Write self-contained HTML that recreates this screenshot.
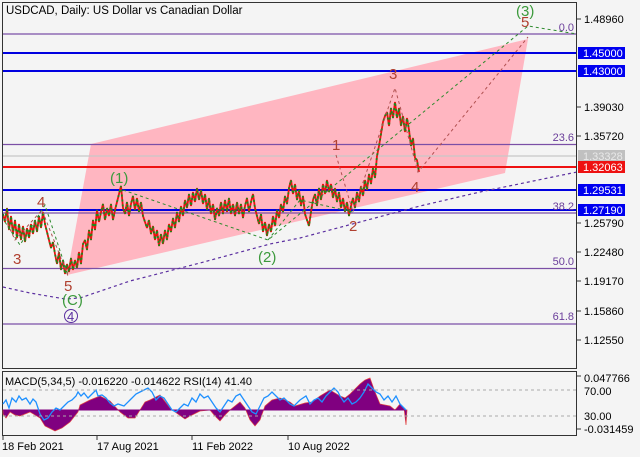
<!DOCTYPE html>
<html><head><meta charset="utf-8"><style>
html,body{margin:0;padding:0;background:#f4f4f4;}
svg{display:block;font-family:"Liberation Sans",sans-serif;}
</style></head><body>
<svg width="640" height="457" viewBox="0 0 640 457" xmlns="http://www.w3.org/2000/svg">
<defs>
<polyline id="pr" points="3,214 5,222 7,208 9,230 11,216 13,234 15,220 17,238 19,224 21,240 23,226 25,242 27,228 29,238 31,224 33,234 35,220 37,232 39,216 41,228 43,212 45,224 47,232 49,240 51,248 53,242 55,254 57,264 59,252 61,270 63,260 65,274 67,264 69,272 71,258 73,270 75,260 77,268 79,252 81,264 83,244 85,240 87,250 89,230 91,240 93,220 95,230 97,210 99,222 101,212 103,204 105,220 107,208 109,216 111,204 113,220 115,210 117,202 119,194 121,186 123,208 125,214 127,202 129,216 131,204 133,196 135,210 137,198 139,212 141,202 143,216 145,222 147,228 149,220 151,234 153,226 155,240 157,230 159,246 161,234 163,244 165,230 167,240 169,224 171,232 173,218 175,228 177,212 179,222 181,206 183,216 185,200 187,208 189,194 191,206 193,192 195,202 197,188 199,200 201,190 203,204 205,194 207,210 209,198 211,214 213,204 215,220 217,208 219,216 221,202 223,214 225,200 227,212 229,198 231,214 233,204 235,216 237,202 239,214 241,204 243,218 245,206 247,198 249,212 251,202 253,194 255,208 257,216 259,224 261,214 263,232 265,222 267,236 269,224 271,232 273,216 275,226 277,210 279,218 281,204 283,212 285,196 287,204 289,188 291,180 293,194 295,184 297,200 299,190 301,206 303,196 305,214 307,220 309,226 311,212 313,200 315,194 317,206 319,188 321,200 323,184 325,194 327,180 329,192 331,184 333,198 335,188 337,202 339,192 341,208 343,198 345,212 347,202 349,216 351,206 353,198 355,208 357,192 359,202 361,186 363,196 365,180 367,190 369,174 371,184 373,168 375,178 377,156 379,146 381,134 383,122 385,116 387,112 389,126 391,108 393,118 395,102 397,118 399,108 401,126 403,116 405,132 407,118 409,130 411,146 413,138 415,158 417,160 419,172"/>
</defs>
<rect width="640" height="457" fill="#f4f4f4"/>
<polygon points="91,144 528,39 505,173 67,275" fill="#ffb6c1"/>
<g stroke-width="1.3">
<line x1="2" y1="34" x2="576" y2="34" stroke="#7b4fa6"/>
<line x1="2" y1="53" x2="576" y2="53" stroke="#0000e0" stroke-width="2"/>
<line x1="2" y1="71" x2="576" y2="71" stroke="#0000e0" stroke-width="2"/>
<line x1="2" y1="144.5" x2="576" y2="144.5" stroke="#7b4fa6"/>
<line x1="2" y1="156" x2="576" y2="156" stroke="#c8c8c8"/>
<line x1="2" y1="167" x2="576" y2="167" stroke="#ee1111" stroke-width="2"/>
<line x1="2" y1="190" x2="576" y2="190" stroke="#0000e0" stroke-width="2"/>
<line x1="2" y1="210" x2="576" y2="210" stroke="#0000e0" stroke-width="2"/>
<line x1="2" y1="213" x2="576" y2="213" stroke="#7b4fa6"/>
<line x1="2" y1="268.5" x2="576" y2="268.5" stroke="#7b4fa6"/>
<line x1="2" y1="324" x2="576" y2="324" stroke="#7b4fa6"/>
</g>
<g font-size="11" fill="#6a3d9a" text-anchor="end">
<text x="574" y="31">0.0</text><text x="574" y="141">23.6</text><text x="574" y="210">38.2</text><text x="574" y="265">50.0</text><text x="574" y="320">61.8</text>
</g>
<polyline points="3,287 30,293 65,299 80,298 130,281 200,263 270,244 300,238 360,222 420,206 480,192 577,172" fill="none" stroke="#5b2fa0" stroke-width="1.2" stroke-dasharray="3,3"/>
<g fill="none" stroke-linejoin="bevel" stroke="#ee1010" stroke-width="1.8"><use href="#pr"/></g>
<g fill="none" stroke-linejoin="bevel" stroke="#1a8a1a" stroke-width="1.8" stroke-dasharray="2,3"><use href="#pr"/></g>
<g fill="none" stroke-width="1" stroke-dasharray="3,3">
<polyline points="123,190 268,240 528,26 577,34" stroke="#2e8b2e"/>
<polyline points="5,222 20,245 45,205 68,275" stroke="#2e8b2e"/>
<polyline points="5,218 15,240 42,210 68,276" stroke="#b05050"/>
<polyline points="336,155 353,212 395,88 418,172 528,37" stroke="#b05050"/>
<polyline points="268,240 300,200 353,212" stroke="#2e8b2e"/>
</g>
<g font-size="15" fill="#b04030">
<text x="37" y="207">4</text><text x="13" y="264">3</text><text x="64" y="291">5</text>
<text x="332" y="150">1</text><text x="349" y="231">2</text><text x="389" y="79">3</text><text x="411" y="192">4</text><text x="521" y="27">5</text>
</g>
<g font-size="15" fill="#3c9a3c">
<text x="110" y="183">(1)</text><text x="258" y="262">(2)</text><text x="62" y="305">(C)</text><text x="516" y="16">(3)</text>
</g>
<circle cx="71" cy="316" r="6.5" fill="none" stroke="#5b2fa0"/>
<text x="67" y="321" font-size="13" fill="#5b2fa0">4</text>
<text x="6" y="14" font-size="11.5" fill="#000">USDCAD, Daily:  US Dollar vs Canadian Dollar</text>
<rect x="2.5" y="2.5" width="574" height="366" fill="none" stroke="#333"/>
<rect x="2.5" y="371.5" width="574" height="64" fill="none" stroke="#333"/>
<g font-size="11" fill="#000">
<text x="584" y="23">1.48960</text><text x="584" y="111">1.39030</text><text x="584" y="140">1.35720</text>
<text x="584" y="227">1.25790</text><text x="584" y="256">1.22480</text><text x="584" y="285">1.19170</text><text x="584" y="315">1.15860</text><text x="584" y="344">1.12550</text>
</g>
<g stroke="#333"><line x1="577" y1="19" x2="581" y2="19"/><line x1="577" y1="107" x2="581" y2="107"/><line x1="577" y1="136" x2="581" y2="136"/><line x1="577" y1="223" x2="581" y2="223"/><line x1="577" y1="252" x2="581" y2="252"/><line x1="577" y1="281" x2="581" y2="281"/><line x1="577" y1="311" x2="581" y2="311"/><line x1="577" y1="340" x2="581" y2="340"/></g>
<rect x="578" y="47" width="47" height="12" fill="#0000f0"/><text x="583" y="57" font-size="11" fill="#fff">1.45000</text>
<rect x="578" y="65" width="47" height="12" fill="#0000f0"/><text x="583" y="75" font-size="11" fill="#fff">1.43000</text>
<rect x="578" y="150" width="47" height="12" fill="#c0c0c0"/><text x="583" y="160" font-size="11" fill="#e8e8e8">1.33328</text>
<rect x="578" y="161" width="47" height="12" fill="#ee1111"/><text x="583" y="171" font-size="11" fill="#fff">1.32063</text>
<rect x="578" y="184" width="47" height="12" fill="#0000f0"/><text x="583" y="194" font-size="11" fill="#fff">1.29531</text>
<rect x="578" y="204" width="47" height="12" fill="#0000f0"/><text x="583" y="214" font-size="11" fill="#fff">1.27190</text>
<path d="M3,410 L3,414 6,418 10,412 15,415 20,416 30,412 40,418 45,426 55,431 62,428 70,422 78,412 80,405 90,400 95,398 100,396 110,401 120,412 128,418 135,418 145,402 150,400 160,395 170,408 175,412 185,419 190,416 200,411 210,410 215,416 220,421 225,415 230,410 240,402 245,408 250,420 255,426 260,420 265,406 272,400 280,398 290,402 295,406 305,403 312,402 320,396 330,390 340,396 345,398 350,394 360,384 365,380 370,378 375,392 380,404 390,406 395,410 400,404 404,408 406,425 407,410 Z" fill="#800080" stroke="#e04040" stroke-width="0.7"/>
<line x1="3" y1="410" x2="406" y2="410" stroke="#800080"/>
<polyline fill="none" stroke="#1e90ff" stroke-width="1.3" points="3,404 6,400 9,408 12,398 16,402 19,396 22,400 26,398 30,404 33,399 36,402 40,414 44,420 48,418 52,412 56,408 60,410 64,406 68,402 72,400 76,396 78,392 81,396 84,393 88,398 92,394 96,390 98,396 102,395 106,398 110,403 114,406 118,404 124,406 130,400 136,394 140,392 144,390 148,388 152,392 156,400 160,396 164,398 168,404 172,410 176,412 180,408 184,404 188,406 192,398 196,402 200,394 204,398 208,396 212,402 216,408 220,412 224,406 228,400 232,402 236,396 240,394 244,400 248,406 252,412 256,414 260,406 264,398 268,396 272,392 276,396 280,400 284,398 290,404 294,406 300,400 306,396 310,404 314,400 318,398 322,402 326,396 330,392 334,388 338,392 340,396 344,402 348,398 352,404 356,402 360,398 364,392 368,384 372,388 376,392 380,394 384,400 388,396 392,402 396,396 400,404 404,408 406,410"/>
<line x1="3" y1="390" x2="576" y2="390" stroke="#aaa" stroke-dasharray="3,3"/>
<line x1="3" y1="416" x2="576" y2="416" stroke="#aaa" stroke-dasharray="3,3"/>
<text x="5" y="385" font-size="11" fill="#000">MACD(5,34,5) -0.016220 -0.014622 RSI(14) 41.40</text>
<g font-size="11" fill="#000"><text x="584" y="382">0.047766</text><text x="584" y="395">70.00</text><text x="584" y="420">30.00</text><text x="584" y="433">-0.031459</text></g>
<g font-size="11" fill="#000"><text x="2" y="450">18 Feb 2021</text><text x="97" y="450">17 Aug 2021</text><text x="192" y="450">11 Feb 2022</text><text x="288" y="450">10 Aug 2022</text></g>
<g stroke="#333"><line x1="3" y1="436" x2="3" y2="440"/><line x1="97" y1="436" x2="97" y2="440"/><line x1="192" y1="436" x2="192" y2="440"/><line x1="288" y1="436" x2="288" y2="440"/><line x1="577" y1="376" x2="581" y2="376"/><line x1="577" y1="429" x2="581" y2="429"/></g>
</svg>
</body></html>
